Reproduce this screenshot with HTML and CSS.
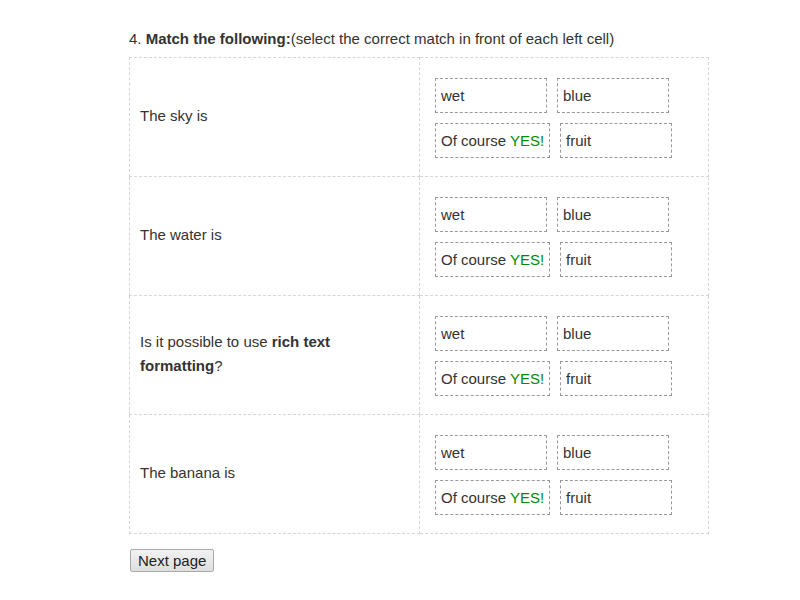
FILE: index.html
```html
<!DOCTYPE html>
<html lang="en">
<head>
  <meta charset="UTF-8" />
  <title>Match the following</title>
  <link rel="stylesheet" href="styles.css">
</head>
<body>

<div class="quiz">
  <div class="question">4. <b>Match the following:</b>(select the correct match in front of each left cell)</div>

  <table class="match">
    <tr>
      <td class="left">The sky is</td>
      <td class="right">
        <div class="opts"><span class="opt">wet</span><span class="opt">blue</span></div>
        <div class="opts"><span class="opt">Of course <span class="yes">YES!</span></span><span class="opt">fruit</span></div>
      </td>
    </tr>
    <tr>
      <td class="left">The water is</td>
      <td class="right">
        <div class="opts"><span class="opt">wet</span><span class="opt">blue</span></div>
        <div class="opts"><span class="opt">Of course <span class="yes">YES!</span></span><span class="opt">fruit</span></div>
      </td>
    </tr>
    <tr>
      <td class="left">Is it possible to use <b>rich text<br>formatting</b>?</td>
      <td class="right">
        <div class="opts"><span class="opt">wet</span><span class="opt">blue</span></div>
        <div class="opts"><span class="opt">Of course <span class="yes">YES!</span></span><span class="opt">fruit</span></div>
      </td>
    </tr>
    <tr>
      <td class="left">The banana is</td>
      <td class="right">
        <div class="opts"><span class="opt">wet</span><span class="opt">blue</span></div>
        <div class="opts"><span class="opt">Of course <span class="yes">YES!</span></span><span class="opt">fruit</span></div>
      </td>
    </tr>
  </table>

  <button class="next">Next page</button>
</div>

</body>
</html>
```

FILE: styles.css
```css
body {
  font-family: 'Liberation Sans', Arial, sans-serif;
  font-size: 15px;
  color: #333;
  background: #fff;
  margin: 0;
  padding: 0;
}

.quiz {
  margin-left: 129px;
  width: 580px;
  padding-top: 27px;
}

.question {
  line-height: 24px;
  margin-bottom: 6px;
}

.match {
  border-collapse: collapse;
  width: 580px;
}

.match td {
  border: 1px dashed #d6d6d6;
  height: 115px;
  padding: 0 10px 3px;
  vertical-align: middle;
  line-height: 24px;
}

.match .left {
  width: 269px;
}

.match .right {
  padding: 2px 10px 1px;
}

.opts {
  display: flex;
}

.opt {
  display: inline-block;
  min-width: 100px;
  padding: 5px 5px 4px;
  margin: 5px;
  border: 1px dashed #999;
  white-space: nowrap;
}

.yes {
  color: #008a00;
}

.next {
  margin-top: 15px;
  margin-left: 1px;
  font-family: 'Liberation Sans', Arial, sans-serif;
  font-size: 15px;
  color: #222;
  padding: 1px 7px;
  height: 23px;
  border: 1px solid #a9a9a9;
  border-radius: 2px;
  background: linear-gradient(#f2f2f2, #dedede);
}
```
